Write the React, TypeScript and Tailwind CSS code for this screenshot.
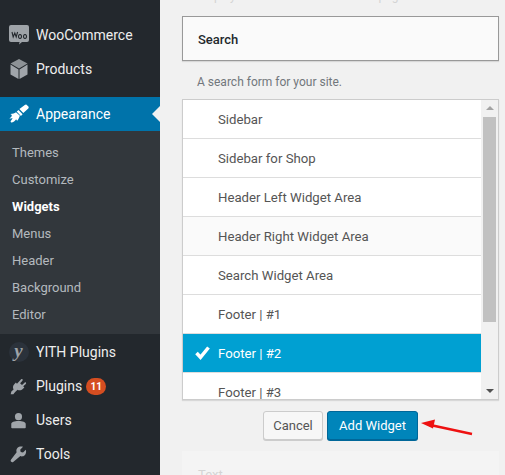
const ROWS = [
  "Sidebar",
  "Sidebar for Shop",
  "Header Left Widget Area",
  "Header Right Widget Area",
  "Search Widget Area",
  "Footer | #1",
  "Footer | #2",
  "Footer | #3",
];

const SUBMENU = ["Themes", "Customize", "Widgets", "Menus", "Header", "Background", "Editor"];

function WooIcon() {
  return (
    <svg width="20" height="20" viewBox="0 0 20 20">
      <path d="M2 0h16a2 2 0 0 1 2 2v13a2 2 0 0 1-2 2h-5l-3 2.600.6-2.600H2a2 2 0 0 1-2-2V2a2 2 0 0 1 2-2z" fill="#9ea3a8" />
      <path d="M3 7l1.200 5 1.600-4 1.400 4L8.600 7M11 9.500a1.500 2 0 1 0 .01 0zM16 9.500a1.500 2 0 1 0 .01 0z" fill="none" stroke="#23282d" strokeWidth="1.100" />
    </svg>
  );
}

function BoxIcon() {
  return (
    <svg width="18" height="20" viewBox="0 0 18 20">
      <path d="M9 0l8.500 4.500L9 9.500.5 4.500z" fill="#8d9296" />
      <path d="M.5 5.500L8.500 10.500V20L.5 15.500z" fill="#a0a5aa" />
      <path d="M17.500 5.500L9.500 10.500V20l8-4.500z" fill="#a0a5aa" />
    </svg>
  );
}

function BrushIcon() {
  return (
    <svg width="20" height="20" viewBox="0 0 20 20">
      <path d="M19.400 2.600l-1.900-1.900c-.5-.5-1.200-.2-1.700.2L10.400 5l3.900 4 5-4.600c.5-.5.5-1.200.1-1.800zM9.500 5.900L7.700 7.600l4.200 4.400 1.700-1.800zM7 8.300c-1.600 1.300-3 1.300-5.600 1.600 1 .6 1.500 1 1.400 1.700C2.600 13 1.500 13.800.4 14.500c1.500.3 2.500 0 3.200-.4-.3 1-1 2.100-2 3.100 0 .7.600 1.300 1.300 1.300 2-.5 3.200-2 4.300-3.300.2.800.6 1.300 1.400 1.400.8-1.500 1.700-3.300 2.300-4.900z" fill="#fff" />
    </svg>
  );
}

function YithIcon() {
  return (
    <div className="flex h-[20px] w-[20px] items-center justify-center rounded-full bg-[#2b323b] pb-[4px] font-['Liberation_Serif',serif] text-[19px] font-bold italic leading-none text-[#9ea3a8]">
      y
    </div>
  );
}

function PlugIcon() {
  return (
    <svg width="17" height="17" viewBox="0 0 20 20">
      <path d="M13.100 1.600c.5-.5 1.200-.5 1.600-.1.4.4.4 1.100-.1 1.600l-2.700 3 2.200 2.200 3-2.800c.5-.5 1.200-.5 1.600-.1.4.4.4 1.100-.1 1.600l-3 2.800 1.300 1.300-1.600 1.600c-2 2-4.400 2.300-6.400 1.100L6.400 16.300c-1 1-1.800 1.900-2.400 2.700H.8l.8-3.200 2.600-2.400C3 11.400 3.300 9 5.300 7l1.600-1.600 1.300 1.300z" fill="#a0a5aa" />
    </svg>
  );
}

function UserIcon() {
  return (
    <svg width="17" height="17" viewBox="0 0 20 20">
      <circle cx="10" cy="5.500" r="4.200" fill="#a0a5aa" />
      <path d="M10 10.500c5 0 8.500 1.200 8.500 3.500v4.500a1 1 0 0 1-1 .5h-15a1 1 0 0 1-1-.5V14c0-2.300 3.500-3.500 8.500-3.500z" fill="#a0a5aa" />
    </svg>
  );
}

function WrenchIcon() {
  return (
    <svg width="17" height="17" viewBox="0 0 20 20">
      <path d="M18.600 4.300l-3.300 3.300-2.700-.6-.6-2.700 3.300-3.300C12.900.1 10.300.7 8.900 2.200 7.600 3.500 7.100 5.500 7.800 7.300L1.300 15.800c-.8 1-.7 2 .1 2.800.8.800 1.900.7 2.700-.1l8.100-6.600c1.800.7 3.800.2 5.100-1.100 1.500-1.500 2.100-4.200 1.300-6.500z" fill="#a0a5aa" />
    </svg>
  );
}

function MenuItem({ icon, label, badge }: { icon: React.ReactNode; label: string; badge?: string }) {
  return (
    <div className="flex h-[34px] items-center text-[14px] text-[#eeeeee]">
      <div className="flex w-[36px] justify-center pl-[1px]">{icon}</div>
      <span>{label}</span>
      {badge && (
        <span className="ml-[4px] flex h-[17px] w-[20px] items-center justify-center rounded-full bg-[#d54e21] text-[10px] font-bold text-white">
          {badge}
        </span>
      )}
    </div>
  );
}

export default function App() {
  return (
    <div className="flex h-[475px] w-[505px] overflow-hidden bg-[#f1f1f1] font-['Roboto',sans-serif]">
      {/* admin menu */}
      <div className="w-[160px] shrink-0 bg-[#23282d]">
        <div className="pt-[18px]">
          <MenuItem icon={<WooIcon />} label="WooCommerce" />
          <MenuItem icon={<BoxIcon />} label="Products" />
        </div>
        <div className="relative mt-[11px] flex h-[34px] items-center bg-[#0073aa] text-[14px] text-white">
          <div className="flex w-[36px] justify-center pl-[1px]">
            <BrushIcon />
          </div>
          <span>Appearance</span>
          <div className="absolute right-0 top-[9px] h-0 w-0 border-y-[8px] border-r-[8px] border-y-transparent border-r-[#f1f1f1]" />
        </div>
        <div className="h-[203px] bg-[#32373c] pl-[12px] pt-[8px] text-[13px] text-[#b4b9be]">
          {SUBMENU.map((s) => (
            <div key={s} className={`flex h-[27px] items-center ${s === "Widgets" ? "font-bold text-white" : ""}`}>
              {s}
            </div>
          ))}
        </div>
        <div className="pt-[1px]">
          <MenuItem icon={<YithIcon />} label="YITH Plugins" />
          <MenuItem icon={<PlugIcon />} label="Plugins" badge="11" />
          <MenuItem icon={<UserIcon />} label="Users" />
          <MenuItem icon={<WrenchIcon />} label="Tools" />
        </div>
      </div>

      {/* widget chooser */}
      <div className="relative min-w-0 flex-1 pl-[22px] pr-[6px]">
        <p className="mt-[-13px] h-[29px] pl-[15px] text-[12px] leading-[18px] text-[#d4d4d4]">Displays a revolution slider on the page</p>
        <div className="flex h-[45px] items-center border border-[#999999] bg-[#fafafa] pl-[15px] pt-[2px] text-[13px] font-medium text-[#23282d] shadow-[0_1px_1px_rgba(0,0,0,0.1)]">
          Search
        </div>
        <p className="mt-[12px] h-[26px] pl-[15px] text-[12px] leading-[18px] text-[#72777c]">A search form for your site.</p>
        <div className="flex h-[301px] border border-[#cccccc] bg-white shadow-[0_1px_1px_rgba(0,0,0,0.1)]">
          <div className="min-w-0 flex-1 overflow-hidden">
            {ROWS.map((r, i) => (
              <div
                key={r}
                className={`flex h-[39px] shrink-0 items-center border-b border-[#dddddd] pl-[35px] pt-[1px] text-[13.2px] ${
                  i === 6 ? "relative bg-[#00a0d2] text-white" : i === 3 ? "bg-[#fafafa] text-[#555555]" : "text-[#555555]"
                }`}
              >
                {i === 6 && (
                  <svg className="absolute left-[12px] top-[11px]" width="15" height="15" viewBox="0 0 15 15">
                    <path d="M1.500 8l4 4.300L13.500 2.500" fill="none" stroke="#fff" strokeWidth="3.500" />
                  </svg>
                )}
                {r}
              </div>
            ))}
          </div>
          <div className="flex w-[17px] shrink-0 flex-col items-center bg-[#f1f1f1]">
            <div className="mt-[6px] h-0 w-0 border-x-[4px] border-b-[4px] border-x-transparent border-b-[#a3a3a3]" />
            <div className="mt-[7px] h-[205px] w-[13px] bg-[#c1c1c1]" />
            <div className="mt-auto mb-[6px] h-0 w-0 border-x-[4px] border-t-[4px] border-x-transparent border-t-[#505050]" />
          </div>
        </div>
        <div className="mt-[11px] flex justify-center gap-[4px]">
          <button className="h-[29px] w-[60px] rounded-[3px] border border-[#cccccc] bg-[#f7f7f7] text-[13px] text-[#555555] shadow-[0_1px_0_#cccccc]">
            Cancel
          </button>
          <button className="h-[29px] w-[91px] rounded-[3px] border border-[#006799] bg-[#0085ba] text-[13px] text-white shadow-[0_1px_0_#006799]">
            Add Widget
          </button>
        </div>
        <div className="mt-[11px] h-[40px] bg-[#f4f4f4] pl-[16px] pt-[14px] text-[13px] text-[#d4d4d4]">Text</div>

        {/* annotation arrow */}
        <svg className="absolute left-[258px] top-[415px]" width="56" height="24" viewBox="0 0 56 24">
          <path d="M10 9.500l44 9.500" stroke="#ee1111" strokeWidth="2.500" />
          <path d="M3 8L17 4.500l-2 9z" fill="#ee1111" />
        </svg>
      </div>
    </div>
  );
}
